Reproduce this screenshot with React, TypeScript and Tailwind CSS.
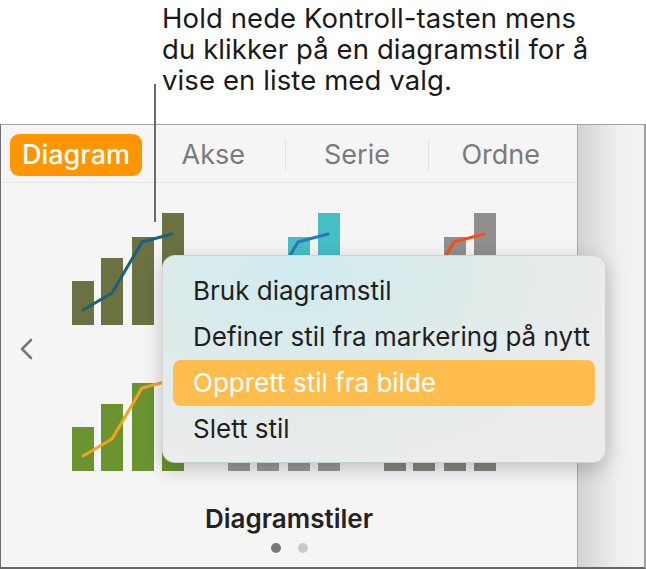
import React from 'react';

type Chart = { bar: string; line: string };

// thumbnail styles, row by row
const charts: Chart[] = [
  { bar: '#6b7140', line: '#1c5f78' },
  { bar: '#44bfc6', line: '#2b7bb3' },
  { bar: '#8f8f8f', line: '#ff4b1c' },
  { bar: '#6b932f', line: '#f2a41e' },
  { bar: '#9a9a9a', line: '#6f6f6f' },
  { bar: '#8a8580', line: '#5f5a55' },
];

const bars = [
  { x: 0, y: 68 },
  { x: 29, y: 45 },
  { x: 60, y: 24 },
  { x: 90, y: 0 },
];

const ChartThumb: React.FC<{ chart: Chart }> = ({ chart }) => (
  <svg width="112" height="112" viewBox="0 0 112 112">
    {bars.map((b) => (
      <rect key={b.x} x={b.x} y={b.y} width="22" height={112 - b.y} fill={chart.bar} />
    ))}
    <polyline
      points="11,97 40,80 70,29 100,21"
      fill="none"
      stroke={chart.line}
      strokeWidth="3"
      strokeLinejoin="round"
      strokeLinecap="round"
    />
  </svg>
);

const menuItems = [
  'Bruk diagramstil',
  'Definer stil fra markering på nytt',
  'Opprett stil fra bilde',
  'Slett stil',
];

export default function App() {
  return (
    <div className="relative w-[646px] h-[569px] overflow-hidden bg-white font-['Inter','Liberation_Sans',sans-serif]">
      {/* Callout */}
      <div className="h-[124px] pl-[162px] pt-[3px] text-[27.5px] leading-[31px] text-[#1a1a1a] tracking-[0.1px]">
        <p>Hold nede Kontroll-tasten mens</p>
        <p>du klikker på en diagramstil for å</p>
        <p>vise en liste med valg.</p>
      </div>

      {/* Window */}
      <div className="flex h-[445px] border-t border-t-[#a3a3a3] border-l border-l-[#6e6e6e] border-r-2 border-r-[#a0a0a0] border-b-2 border-b-[#666666]">
        <div className="w-[577px] flex flex-col bg-[#f5f5f5] border-r border-r-[#a8a8a8]">
          {/* Tabs */}
          <div className="h-[58px] flex items-start pl-[9px] pr-[5px] border-b border-b-[#e4e4e4]">
            <div className="mt-[9px] w-[132px] h-[42px] rounded-[9px] bg-[#ff9500] flex items-center justify-center text-white text-[27px] font-medium">
              Diagram
            </div>
            <div className="flex-1 flex mt-[14px] h-[32px] text-[27px] text-[#7b7b7b]">
              <div className="flex-1 flex items-center justify-center">Akse</div>
              <div className="flex-1 flex items-center justify-center border-l border-l-[#e2e2e2]">Serie</div>
              <div className="flex-1 flex items-center justify-center border-l border-l-[#e2e2e2]">Ordne</div>
            </div>
          </div>

          {/* Styles */}
          <div className="flex pt-[30px]">
            <div className="w-[71px] pl-[17px] pt-[125px]">
              <svg width="16" height="22" viewBox="0 0 16 22">
                <path d="M13 2 L4 11 L13 20" fill="none" stroke="#777777" strokeWidth="2.6" strokeLinecap="round" strokeLinejoin="round" />
              </svg>
            </div>
            <div className="grid grid-cols-[112px_112px_112px] gap-x-[44px] gap-y-[34px]">
              {charts.map((c, i) => (
                <ChartThumb key={i} chart={c} />
              ))}
            </div>
          </div>

          <div className="mt-[33px] text-center text-[26px] leading-[29px] font-semibold text-[#222222]">
            Diagramstiler
          </div>
          <div className="mt-[10px] flex justify-center gap-[17px]">
            <span className="w-[10px] h-[10px] rounded-full bg-[#777777]" />
            <span className="w-[10px] h-[10px] rounded-full bg-[#c9c9c9]" />
          </div>
        </div>
        <div className="flex-1 bg-[linear-gradient(to_right,#d3d3d3,#efefef_60%,#f4f4f4)]" />
      </div>

      {/* Leader line */}
      <div className="absolute left-[154px] top-[84px] w-[2px] h-[138px] bg-[#6a6a6a]" />

      {/* Context menu */}
      <div className="absolute left-[162px] top-[255px] w-[444px] h-[208px] rounded-[13px] border border-black/10 shadow-[0_6px_20px_rgba(0,0,0,0.22)] bg-[radial-gradient(ellipse_at_30%_10%,#cfebef_0%,#e0ebea_42%,#ececec_75%)] pt-[12px] px-[10px] text-[26px] text-[#1f1f1f]">
        {menuItems.map((item, i) => (
          <div
            key={item}
            className={
              i === 2
                ? 'h-[46px] leading-[46px] pl-[20px] rounded-[8px] bg-[#ffbd4d] text-white'
                : 'h-[46px] leading-[46px] pl-[20px]'
            }
          >
            {item}
          </div>
        ))}
      </div>
    </div>
  );
}
